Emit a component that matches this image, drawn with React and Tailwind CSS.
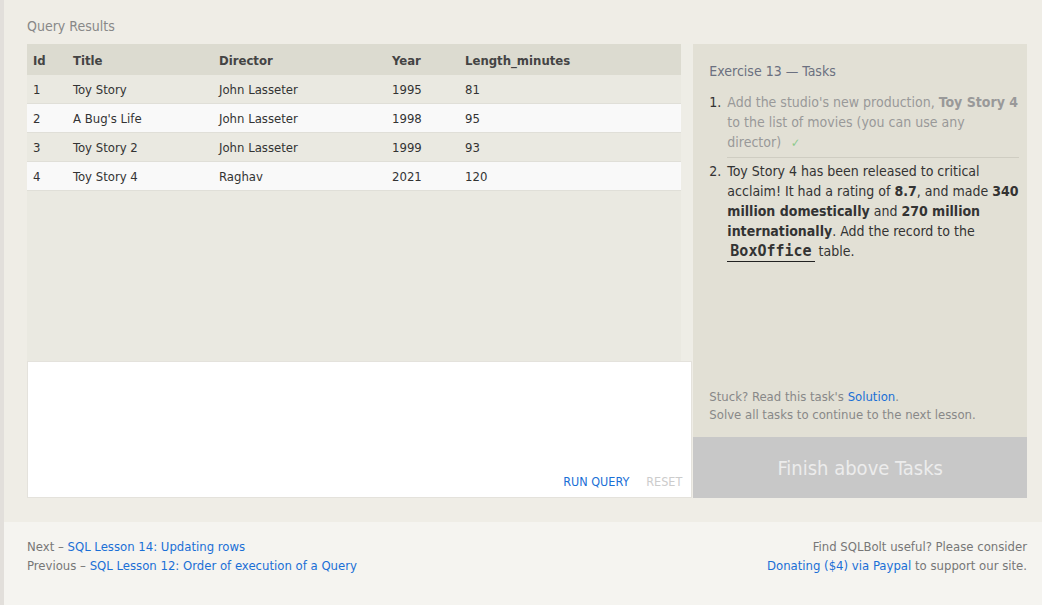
import React from 'react';

const rows = [
  { id: 1, title: 'Toy Story', director: 'John Lasseter', year: 1995, len: 81 },
  { id: 2, title: "A Bug's Life", director: 'John Lasseter', year: 1998, len: 95 },
  { id: 3, title: 'Toy Story 2', director: 'John Lasseter', year: 1999, len: 93 },
  { id: 4, title: 'Toy Story 4', director: 'Raghav', year: 2021, len: 120 },
];

const font = { fontFamily: '"DejaVu Sans Condensed", "DejaVu Sans", Tahoma, sans-serif' };

const App = () => {
  return (
    <div className="w-[1042px] h-[605px] overflow-hidden bg-[#efede6] text-[#333] border-l-4 border-[#e2dfdb]" style={font}>
      {/* Exercise area */}
      <div className="h-[522px] pl-[23px] pr-[15px] pt-[16px]">
        <div className="text-[14px] text-[#888] leading-[20px] h-[28px]">Query Results</div>
        <div className="flex h-[454px]">
          {/* Left: results + editor */}
          <div className="w-[666px] flex flex-col">
            <div className="h-[317px] flex bg-[#eeede6]">
              <div className="w-[654px] bg-[#eae9e1]">
                <div className="flex h-[31px] items-center pt-[2px] bg-[#dcdbd0] text-[13px] font-bold text-[#444]">
                  <div className="w-[40px] pl-[6px]">Id</div>
                  <div className="w-[146px] pl-[6px]">Title</div>
                  <div className="w-[173px] pl-[6px]">Director</div>
                  <div className="w-[73px] pl-[6px]">Year</div>
                  <div className="flex-1 pl-[6px]">Length_minutes</div>
                </div>
                {rows.map((r, i) => (
                  <div
                    key={r.id}
                    className={`flex h-[29px] items-center pt-[2px] text-[13px] text-[#333] border-b border-[#e0dfd8] ${i % 2 === 0 ? 'bg-[#eae9e1]' : 'bg-[#f9f9f9]'}`}
                  >
                    <div className="w-[40px] pl-[6px]">{r.id}</div>
                    <div className="w-[146px] pl-[6px]">{r.title}</div>
                    <div className="w-[173px] pl-[6px]">{r.director}</div>
                    <div className="w-[73px] pl-[6px]">{r.year}</div>
                    <div className="flex-1 pl-[6px]">{r.len}</div>
                  </div>
                ))}
              </div>
            </div>
            <div className="flex-1 bg-white border border-[#e4e2dc] flex items-end justify-end gap-[17px] pr-[9px] pb-[5px] text-[12.5px]">
              <span className="text-[#1a6fd6]">RUN QUERY</span>
              <span className="text-[#cccccc]">RESET</span>
            </div>
          </div>

          {/* Right: tasks */}
          <div className="w-[334px] ml-[1px] flex flex-col">
            <div className="flex-1 bg-[#e2e0d5] pl-[16px] pr-[8px] pt-[17px] flex flex-col">
              <div className="text-[14px] text-[#6b7080] leading-[20px]">Exercise 13 — Tasks</div>
              <ol className="mt-[11px] text-[14px] leading-[20px]">
                <li className="flex">
                  <span className="w-[18px] text-[#333]">1.</span>
                  <div className="flex-1 text-[#999] pb-[4px] border-b border-[#cfcdc2]">
                    Add the studio's new production, <b className="text-[#999]">Toy Story 4</b> to the list of movies (you can use any director)
                    <span className="text-[#8bc98b] text-[12px] ml-[10px]">✓</span>
                  </div>
                </li>
                <li className="flex mt-[3px]">
                  <span className="w-[18px] text-[#333]">2.</span>
                  <div className="flex-1 text-[#333]">
                    Toy Story 4 has been released to critical acclaim! It had a rating of <b>8.7</b>, and made <b>340 million domestically</b> and <b>270 million internationally</b>. Add the record to the{' '}
                    <span
                      className="inline-block font-bold text-[15px] leading-[20px] px-[3px] border-b border-[#222]"
                      style={{ fontFamily: '"DejaVu Sans Mono", "Liberation Mono", monospace' }}
                    >
                      BoxOffice
                    </span>{' '}
                    table.
                  </div>
                </li>
              </ol>
              <div className="mt-auto pb-[13px] text-[13px] leading-[18px] text-[#888]">
                <div>Stuck? Read this task's <span className="text-[#1a6fd6]">Solution</span>.</div>
                <div>Solve all tasks to continue to the next lesson.</div>
              </div>
            </div>
            <div className="h-[61px] bg-[#c8c8c8] flex items-center justify-center text-[20px] text-[#ececec]">
              Finish above Tasks
            </div>
          </div>
        </div>
      </div>

      {/* Footer */}
      <div className="h-[83px] bg-[#f5f4f0] pl-[23px] pr-[15px] pt-[15px] flex justify-between text-[13px] leading-[19px] text-[#777]">
        <div>
          <div>Next – <span className="text-[#1a6fd6]">SQL Lesson 14: Updating rows</span></div>
          <div>Previous – <span className="text-[#1a6fd6]">SQL Lesson 12: Order of execution of a Query</span></div>
        </div>
        <div className="text-right">
          <div>Find SQLBolt useful? Please consider</div>
          <div><span className="text-[#1a6fd6]">Donating ($4) via Paypal</span> to support our site.</div>
        </div>
      </div>
    </div>
  );
};

export default App;
